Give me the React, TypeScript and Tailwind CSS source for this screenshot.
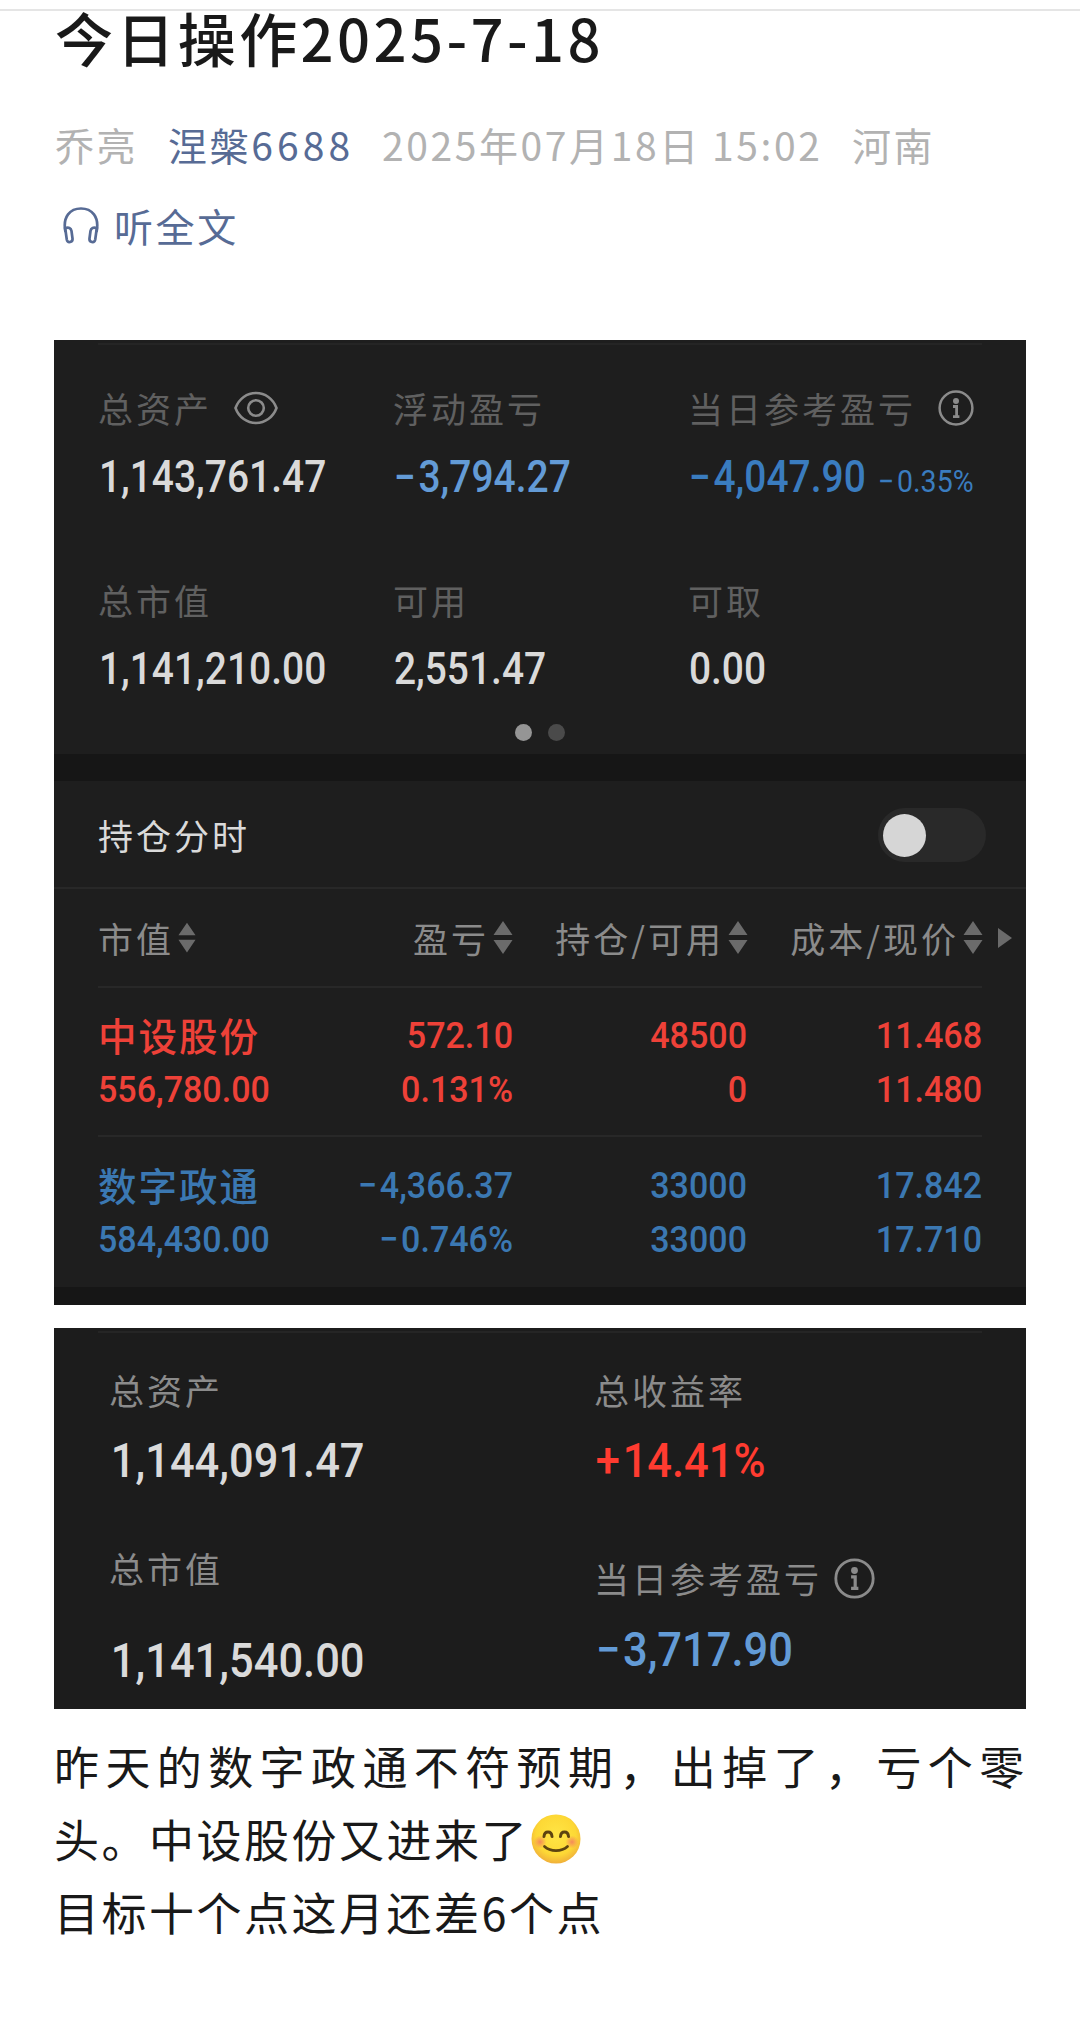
import React from 'react';

const summary = [
  { label: '总资产', value: '1,143,761.47', color: 'text-[#dadada]', icon: 'eye' },
  { label: '浮动盈亏', value: '−3,794.27', color: 'text-[#639bd6]' },
  { label: '当日参考盈亏', value: '−4,047.90', color: 'text-[#3a7cbf]', icon: 'info', extra: '−0.35%' },
  { label: '总市值', value: '1,141,210.00', color: 'text-[#dadada]' },
  { label: '可用', value: '2,551.47', color: 'text-[#dadada]' },
  { label: '可取', value: '0.00', color: 'text-[#dadada]' },
];

const holdings = [
  {
    name: '中设股份',
    color: 'text-[#ee4138]',
    marketValue: '556,780.00',
    profit: ['572.10', '0.131%'],
    position: ['48500', '0'],
    price: ['11.468', '11.480'],
  },
  {
    name: '数字政通',
    color: 'text-[#3b78b2]',
    marketValue: '584,430.00',
    profit: ['−4,366.37', '−0.746%'],
    position: ['33000', '33000'],
    price: ['17.842', '17.710'],
  },
];

function EyeIcon() {
  return (
    <svg width="44" height="34" viewBox="0 0 44 34" fill="none" stroke="#8b8b8b" strokeWidth="2.6">
      <path d="M1.5 17C5 7.5 13 2 22 2s17 5.5 20.5 15C39 26.5 31 32 22 32S5 26.5 1.5 17z" />
      <circle cx="22" cy="17" r="7.8" />
    </svg>
  );
}

function InfoIcon({ size }: { size: number }) {
  return (
    <svg width={size} height={size} viewBox="0 0 36 36" fill="none" stroke="#8b8b8b" strokeWidth="2.5">
      <circle cx="18" cy="18" r="16.4" />
      <circle cx="18" cy="11" r="3" fill="#8b8b8b" stroke="none" />
      <path d="M15 16.5h3.6V26M15 26.7h6.4" strokeWidth="2.8" />
    </svg>
  );
}

function HeadphoneIcon() {
  return (
    <svg width="36" height="37" viewBox="0 0 36 37" fill="none" stroke="#576b95" strokeWidth="2.7">
      <path d="M2.5 25C-.8 9.500 7.500 1.500 18 1.500S36.800 9.500 33.500 25" />
      <path d="M2.200 21.300c3.300-1.600 5.800-.3 6.300 2.700l1 7.500c.5 4-4.800 5-5.700 1.200z" />
      <path d="M33.800 21.300c-3.300-1.600-5.800-.3-6.300 2.700l-1 7.500c-.5 4 4.800 5 5.700 1.200z" />
    </svg>
  );
}

function SortIcon() {
  return (
    <svg width="20" height="34" viewBox="0 0 20 34" fill="#6b6b6b">
      <path d="M10 0l9.500 14H.5zM10 33L.5 19h19z" />
    </svg>
  );
}

function SmileEmoji() {
  return (
    <svg className="ml-[2px]" width="50" height="50" viewBox="0 0 50 50" fill="none">
      <defs>
        <radialGradient id="face" cx="50%" cy="42%" r="58%">
          <stop offset="0" stopColor="#ffe545" />
          <stop offset="0.7" stopColor="#fdd835" />
          <stop offset="1" stopColor="#f0b03a" />
        </radialGradient>
        <radialGradient id="blush">
          <stop offset="0" stopColor="#f58a5a" />
          <stop offset="1" stopColor="#f58a5a" stopOpacity="0" />
        </radialGradient>
      </defs>
      <circle cx="25" cy="25" r="24.5" fill="url(#face)" />
      <circle cx="9" cy="28" r="6.5" fill="url(#blush)" />
      <circle cx="41" cy="28" r="6.5" fill="url(#blush)" />
      <path d="M13 22.500c.5-6 7.500-6 8 0M29.500 22.500c.5-6 7.500-6 8 0" stroke="#5d4410" strokeWidth="3" strokeLinecap="round" />
      <path d="M13.500 32.500c6 5.500 17 5.500 23 0" stroke="#5d4410" strokeWidth="2.8" strokeLinecap="round" />
    </svg>
  );
}

// The sign sits a little apart from the digits
function Amount({ value }: { value: string }) {
  const signed = value.startsWith('−') || value.startsWith('+');
  if (!signed) return <>{value}</>;
  return (
    <>
      <span className="mr-[3px]">{value[0]}</span>
      {value.slice(1)}
    </>
  );
}

function BigAmount({ value, color }: { value: string; color: string }) {
  return (
    <div className={`origin-left scale-x-[.905] pl-[2px] font-['Roboto',sans-serif] text-[48px] leading-[60px] font-medium tracking-[0px] ${color}`}>
      <Amount value={value} />
    </div>
  );
}

function HeaderCell({ label }: { label: string }) {
  return (
    <div className="flex items-center justify-end gap-[4px] text-[#8b8b8b]">
      <span className="whitespace-nowrap">{label}</span>
      <SortIcon />
    </div>
  );
}

function RightCell({ value }: { value: string }) {
  return (
    <span className="origin-right scale-x-[.92] text-right">
      <Amount value={value} />
    </span>
  );
}

export default function App() {
  return (
    <div className="w-[1080px] h-[2020px] bg-white pt-[9px] text-[#191919] font-['Noto_Sans_CJK_SC',sans-serif]">
      <div className="h-[2px] bg-[#e5e5e5]" />

      {/* Article header */}
      <div className="px-[55px]">
        <h1 className="-mt-[3px] h-[58px] text-[58px] leading-[58px] font-medium tracking-[3.4px]">今日操作2025-7-18</h1>
        <div className="mt-[50px] flex h-[56px] items-center text-[39px] tracking-[2.6px] text-[#b2b2b2] whitespace-nowrap">
          <span className="w-[113px]">乔亮</span>
          <span className="w-[214px] text-[#576b95]">涅槃<span className="tracking-[4.1px]">6688</span></span>
          <span className="w-[470px]">2025年07月18日 15:02</span>
          <span>河南</span>
        </div>
        <div className="mt-[25px] flex h-[56px] items-center gap-[15px] pl-[8px] text-[39px] tracking-[2.6px] text-[#576b95]">
          <HeadphoneIcon />
          <span>听全文</span>
        </div>
      </div>

      {/* Account panel */}
      <div className="mx-[54px] mt-[87px] h-[965px] bg-[#1e1e1e] text-[35px] tracking-[3px]">
        <div className="h-[414px] px-[44px] pt-[3px]">
          <div className="h-[2px] bg-[#252525]" />
          <div className="grid grid-cols-[295px_295px_1fr] grid-rows-[192px_149px] pt-[37px]">
            {summary.map((item) => (
              <div key={item.label} className="whitespace-nowrap">
                <div className="flex h-[52px] items-center text-[#606060]">
                  <span>{item.label}</span>
                  {item.icon === 'eye' && <span className="ml-[22px]"><EyeIcon /></span>}
                  {item.icon === 'info' && <span className="ml-[22px]"><InfoIcon size={36} /></span>}
                </div>
                <div className={`mt-[18px] flex items-baseline font-['Roboto',sans-serif] font-medium tracking-[0px] ${item.color}`}>
                  <span className="origin-left scale-x-[.895] pl-[1px] text-[43.5px] leading-[52px]">
                    <Amount value={item.value} />
                  </span>
                  {item.extra && (
                    <span className="-ml-[9px] origin-left scale-x-[.92] text-[31px] font-normal">
                      <Amount value={item.extra} />
                    </span>
                  )}
                </div>
              </div>
            ))}
          </div>
          <div className="mt-px flex justify-center gap-[16px]">
            <div className="size-[17px] rounded-full bg-[#959595]" />
            <div className="size-[17px] rounded-full bg-[#4a4a4a]" />
          </div>
        </div>

        <div className="h-[27px] bg-[#161616]" />

        <div className="flex h-[108px] items-center justify-between border-b-2 border-[#282828] pt-[2px] pl-[44px] pr-[40px]">
          <span className="text-[#dadada]">持仓分时</span>
          <div className="flex h-[54px] w-[108px] items-center rounded-full bg-[#292929] pl-[5px]">
            <div className="size-[43px] rounded-full bg-[#d6d6d6]" />
          </div>
        </div>

        <div className="px-[44px]">
          <div className="grid h-[99px] grid-cols-[98px_317px_235px_235px_13px] items-center border-b-2 border-[#282828] pt-px">
            <HeaderCell label="市值" />
            <HeaderCell label="盈亏" />
            <HeaderCell label="持仓/可用" />
            <HeaderCell label="成本/现价" />
            <svg className="ml-[15px] max-w-none" width="14" height="20" viewBox="0 0 14 20" fill="#6b6b6b">
              <path d="M0 0l14 10L0 20z" />
            </svg>
          </div>
          {holdings.map((stock) => (
            <div
              key={stock.name}
              className={`grid h-[149px] grid-cols-[180px_235px_234px_235px] content-center border-b-2 border-[#282828] pt-[2px] font-['Roboto',sans-serif] text-[37px] leading-[54px] font-medium tracking-[0px] last:border-0 ${stock.color}`}
            >
              <span className="-mt-[2px] mb-[2px] font-['Noto_Sans_CJK_SC',sans-serif] text-[38.5px] font-medium tracking-[2px]">{stock.name}</span>
              <RightCell value={stock.profit[0]} />
              <RightCell value={stock.position[0]} />
              <RightCell value={stock.price[0]} />
              <span className="origin-left scale-x-[.92]">{stock.marketValue}</span>
              <RightCell value={stock.profit[1]} />
              <RightCell value={stock.position[1]} />
              <RightCell value={stock.price[1]} />
            </div>
          ))}
        </div>
        <div className="mt-px h-[18px] bg-[#161616]" />
      </div>

      {/* Return panel */}
      <div className="mx-[54px] mt-[23px] h-[381px] bg-[#1c1c1c] px-[44px] pt-[3px] text-[35px] tracking-[3px] text-[#8b8b8b]">
        <div className="h-[2px] bg-[#252525]" />
        <div className="flex pl-[11px] pt-[31px] leading-[52px]">
          <div className="w-[485px]">
            <div className="mb-[15px]">总资产</div>
            <BigAmount value="1,144,091.47" color="text-[#dadada]" />
            <div className="mt-[51px] mb-[37px]">总市值</div>
            <BigAmount value="1,141,540.00" color="text-[#dadada]" />
          </div>
          <div>
            <div className="mb-[15px]">总收益率</div>
            <BigAmount value="+14.41%" color="text-[#ff3b30]" />
            <div className="mt-[61px] mb-[16px] flex items-center gap-[12px]">
              <span>当日参考盈亏</span>
              <InfoIcon size={41} />
            </div>
            <BigAmount value="−3,717.90" color="text-[#639bd6]" />
          </div>
        </div>
      </div>

      {/* Article text */}
      <div className="mx-[54px] mt-[20px] text-[45px] leading-[73px] tracking-[2.5px]">
        <p className="whitespace-nowrap tracking-[6.4px]">昨天的数字政通不符预期，出掉了，亏个零</p>
        <p className="flex items-center">头。中设股份又进来了<SmileEmoji /></p>
        <p>目标十个点这月还差6个点</p>
      </div>
    </div>
  );
}
